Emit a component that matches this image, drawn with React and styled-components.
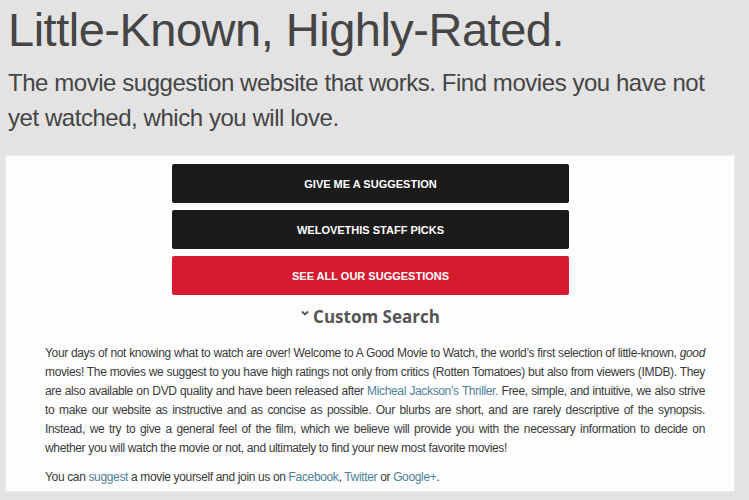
import React from "react";
import styled, { createGlobalStyle } from "styled-components";

const Global = createGlobalStyle`
  body {
    margin: 0;
    background: #e3e3e3;
    font-family: "Liberation Sans", Arial, sans-serif;
  }
`;

const Page = styled.div`
  padding: 0 14px 10px 5px;
`;

const Header = styled.header`
  padding: 0 0 0 3px;
`;

const Title = styled.h1`
  margin: 0;
  padding-top: 3px;
  font-weight: normal;
  font-size: 47px;
  line-height: 54px;
  letter-spacing: -0.5px;
  color: #454545;
`;

const Subtitle = styled.p`
  margin: 8px 0 0;
  font-size: 24px;
  line-height: 35px;
  letter-spacing: -0.45px;
  color: #454545;
`;

const Panel = styled.section`
  margin-top: 20px;
  background: #fdfdfd;
  border: 1px solid #ececec;
  padding: 8px 29px 4px 39px;
`;

const Buttons = styled.div`
  display: flex;
  flex-direction: column;
  align-items: center;
  gap: 7px;
  margin-left: -9px;
`;

const Button = styled.a`
  display: flex;
  align-items: center;
  justify-content: center;
  width: 397px;
  height: 39px;
  border-radius: 2px;
  background: ${(p) => (p.red ? "#d71a30" : "#1b1b1b")};
  color: #ffffff;
  font-size: 11px;
  font-weight: bold;
  text-decoration: none;
  cursor: pointer;
`;

const SearchToggle = styled.div`
  display: flex;
  align-items: center;
  justify-content: center;
  gap: 4px;
  margin: 10px 0 0 -9px;
  font-family: "Open Sans", "Noto Sans", sans-serif;
  font-weight: bold;
  font-size: 17px;
  color: #555555;
  & svg {
    margin-top: -8px;
  }
`;

const Text = styled.p`
  margin: 16px 0 0;
  font-size: 12px;
  line-height: 19px;
  letter-spacing: -0.35px;
  color: #3a3a3a;
  text-align: justify;
  & + & {
    margin-top: 10px;
  }
`;

const Link = styled.a`
  color: #4f8298;
  text-decoration: none;
`;

export default function App() {
  return (
    <Page>
      <Global />
      <Header>
        <Title>Little-Known, Highly-Rated.</Title>
        <Subtitle>
          The movie suggestion website that works. Find movies you have not
          yet watched, which you will love.
        </Subtitle>
      </Header>
      <Panel>
        <Buttons>
          <Button>GIVE ME A SUGGESTION</Button>
          <Button>WELOVETHIS STAFF PICKS</Button>
          <Button red>SEE ALL OUR SUGGESTIONS</Button>
        </Buttons>
        <SearchToggle>
          <svg width="8" height="6" viewBox="0 0 8 6">
            <path d="M1 1.5 L4 4.5 L7 1.5" stroke="#555" strokeWidth="1.8" fill="none" />
          </svg>
          Custom Search
        </SearchToggle>
        <Text>
          Your days of not knowing what to watch are over! Welcome to A Good
          Movie to Watch, the world’s first selection of little-known,{" "}
          <i>good</i> movies! The movies we suggest to you have high ratings not
          only from critics (Rotten Tomatoes) but also from viewers (IMDB). They
          are also available on DVD quality and have been released after{" "}
          <Link>Micheal Jackson’s Thriller.</Link> Free, simple, and intuitive,
          we also strive to make our website as instructive and as concise as
          possible. Our blurbs are short, and are rarely descriptive of the
          synopsis. Instead, we try to give a general feel of the film, which we
          believe will provide you with the necessary information to decide on
          whether you will watch the movie or not, and ultimately to find your
          new most favorite movies!
        </Text>
        <Text>
          You can <Link>suggest</Link> a movie yourself and join us on{" "}
          <Link>Facebook</Link>, <Link>Twitter</Link> or{" "}
          <Link>Google+</Link>.
        </Text>
      </Panel>
    </Page>
  );
}
